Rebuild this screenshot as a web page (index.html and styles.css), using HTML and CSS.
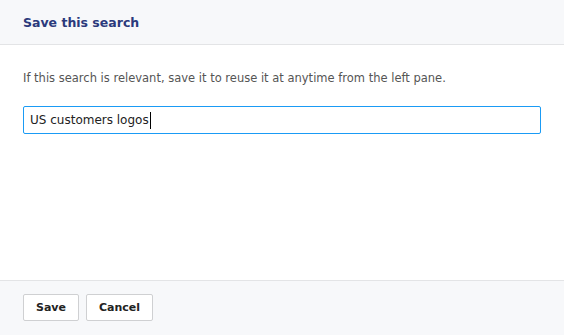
FILE: index.html
```html
<!DOCTYPE html>
<html lang="en">
<head>
  <meta charset="UTF-8" />
  <title>Save this search</title>
  <link rel="stylesheet" href="styles.css">
</head>
<body>
  <div class="dialog">
    <header class="dialog-header">
      <h2>Save this search</h2>
    </header>

    <div class="dialog-body">
      <p>If this search is relevant, save it to reuse it at anytime from the left pane.</p>
      <div class="search-field">US customers logos<span class="caret"></span></div>
    </div>

    <footer class="dialog-footer">
      <button class="btn">Save</button>
      <button class="btn">Cancel</button>
    </footer>
  </div>
</body>
</html>
```

FILE: styles.css
```css
* {
  box-sizing: border-box;
}
body {
  margin: 0;
  font-family: "DejaVu Sans", Verdana, sans-serif;
  background: #fff;
}
.dialog {
  width: 564px;
  height: 335px;
  display: flex;
  flex-direction: column;
}
.dialog-header {
  height: 45px;
  background: #f7f8fa;
  border-bottom: 1px solid #e3e4e6;
  padding: 0 23px;
  display: flex;
  align-items: center;
}
.dialog-header h2 {
  margin: 0;
  font-size: 12.5px;
  font-weight: bold;
  color: #2b3a7c;
}
.dialog-body {
  flex: 1;
  padding: 26px 23px 0;
}
.dialog-body p {
  margin: 0;
  font-size: 11.5px;
  line-height: 14px;
  color: #555;
}
.search-field {
  margin-top: 21px;
  width: 518px;
  height: 28px;
  border: 1px solid #1a9bf5;
  border-radius: 2px;
  padding: 0 6px;
  font-size: 12px;
  color: #222;
  display: flex;
  align-items: center;
}
.caret {
  display: inline-block;
  width: 1px;
  height: 17px;
  background: #000;
  margin-left: 1px;
}
.dialog-footer {
  height: 55px;
  background: #f7f8fa;
  border-top: 1px solid #e3e4e6;
  padding: 13px 23px 0;
  display: flex;
  align-items: flex-start;
  gap: 7px;
}
.btn {
  height: 27px;
  padding: 0 12px;
  background: #fff;
  border: 1px solid #cfd0d2;
  border-radius: 2px;
  font-family: inherit;
  font-size: 11px;
  font-weight: bold;
  color: #222;
}
```
